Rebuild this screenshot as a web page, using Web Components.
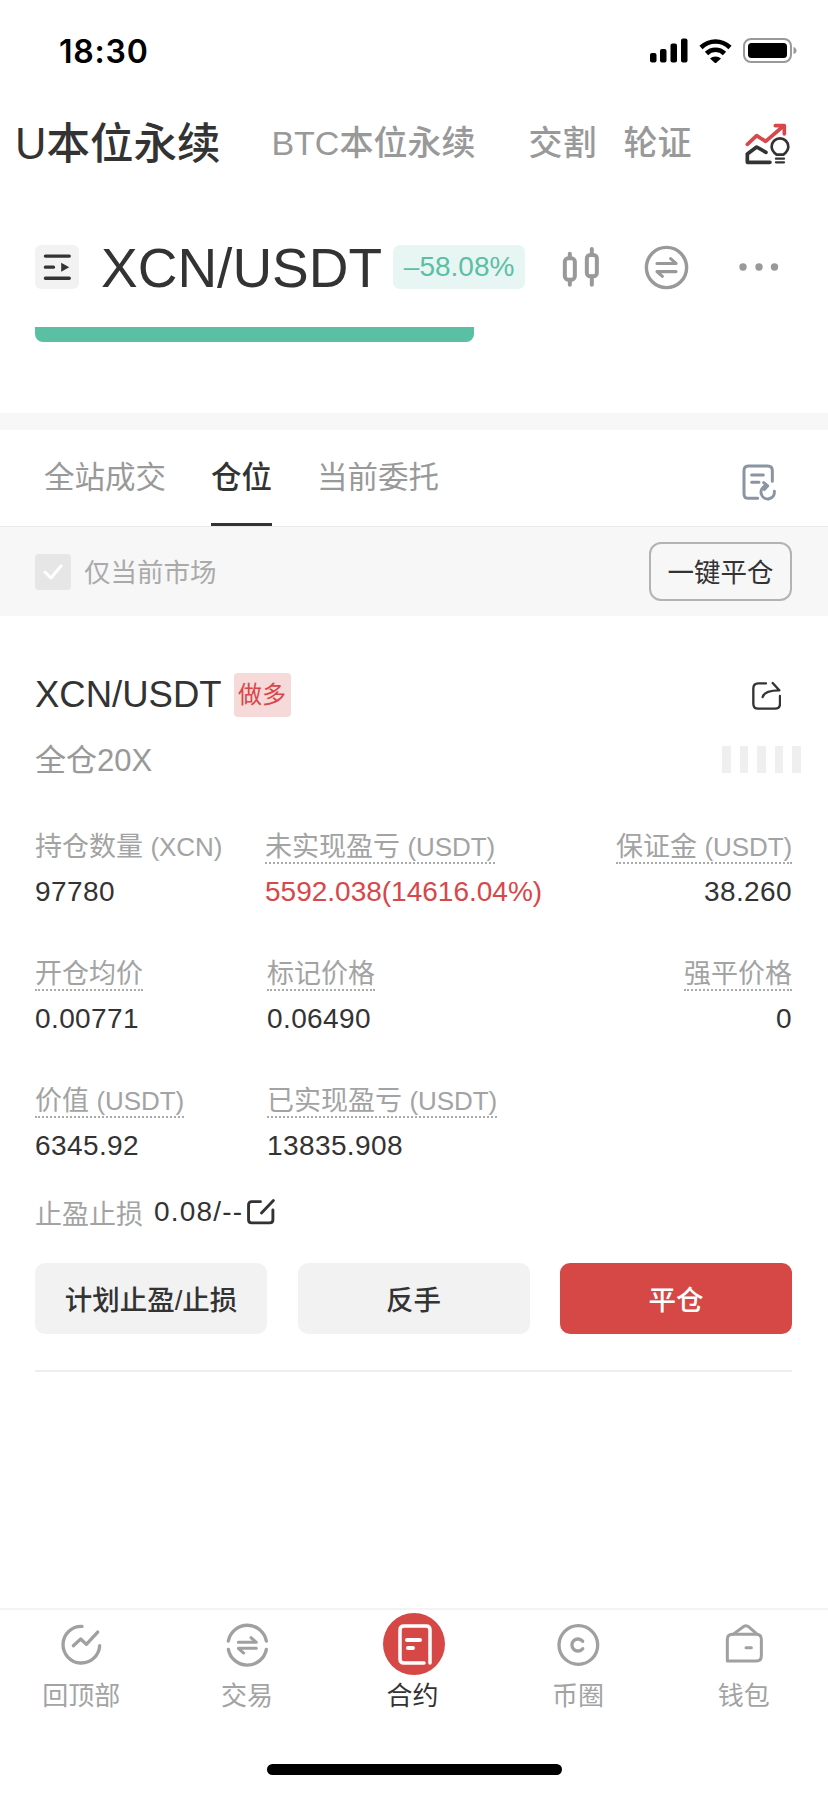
<!DOCTYPE html>
<html lang="zh-CN">
<head>
<meta charset="utf-8">
<title>合约</title>
<style>
  html, body { margin: 0; background: #fff; }
  body {
    font-family: "Liberation Sans", "Noto Sans CJK SC", sans-serif;
    color: #333;
  }
</style>
</head>
<body>
<app-page></app-page>

<script>
class AppPage extends HTMLElement {
  constructor() {
    super();
    this.attachShadow({ mode: 'open' });
  }

  connectedCallback() {
    this.shadowRoot.innerHTML = `
      <style>
        :host { display: flex; flex-direction: column; width: 828px; height: 1793px; overflow: hidden; background: #fff; }
        .band { height: 17px; background: #f7f7f7; margin-top: 71px; }
        .grow { flex: 1; }
      </style>
      <status-bar></status-bar>
      <market-tabs></market-tabs>
      <symbol-header></symbol-header>
      <div class="band"></div>
      <position-tabs></position-tabs>
      <position-filter></position-filter>
      <position-card></position-card>
      <div class="grow"></div>
      <bottom-nav></bottom-nav>
    `;
  }
}

class StatusBar extends HTMLElement {
  constructor() {
    super();
    this.attachShadow({ mode: 'open' });
  }

  connectedCallback() {
    this.shadowRoot.innerHTML = `
      <style>
        :host { display: flex; align-items: center; justify-content: space-between; height: 100px; padding: 0 31px 0 59px; box-sizing: border-box; color: #000; }
        .time { font-family: "Inter", sans-serif; font-size: 32px; font-weight: 600; letter-spacing: 0.8px; padding-top: 2px; }
        .icons { display: flex; align-items: center; gap: 11px; }
        svg { display: block; }
      </style>
      <span class="time">18:30</span>
      <div class="icons">
        <svg width="38" height="25" viewBox="0 0 38 25">
          <rect x="0" y="15" width="6.5" height="9.5" rx="2"/>
          <rect x="10" y="11" width="6.5" height="13.5" rx="2"/>
          <rect x="20.5" y="5.5" width="6.5" height="19" rx="2"/>
          <rect x="31" y="0.5" width="6.5" height="24" rx="2"/>
        </svg>
        <svg width="33" height="25" viewBox="0 0 33 25">
          <path d="M2 9.5C10.500 1.500 22.500 1.500 31 9.500M7.500 15.500C12.500 10.500 20.500 10.500 25.500 15.500" fill="none" stroke="#000" stroke-width="4.600"/>
          <path d="M11 20.500C14 17.800 19 17.800 22 20.500L16.500 25.500Z"/>
        </svg>
        <svg width="54" height="25" viewBox="0 0 54 25">
          <rect x="1" y="1" width="47" height="23" rx="7" fill="none" stroke="#999" stroke-width="2"/>
          <rect x="5" y="5" width="39" height="15" rx="3.500"/>
          <path d="M50.500 9C52.500 9.500 53.500 11 53.500 12.500C53.500 14 52.500 15.500 50.500 16Z" fill="#999"/>
        </svg>
      </div>
    `;
  }
}

class MarketTabs extends HTMLElement {
  constructor() {
    super();
    this.attachShadow({ mode: 'open' });
  }

  connectedCallback() {
    this.shadowRoot.innerHTML = `
      <style>
        :host { display: flex; align-items: center; height: 86px; box-sizing: border-box; padding: 0 0 6px 15px; color: #999; font-size: 34px; font-weight: 500; }
        .active { color: #333; font-size: 43.500px; margin-right: 51px; }
        .btc { margin-right: 53px; }
        .deliver { margin-right: 27px; }
        svg { display: block; margin: 8px 35px 0 auto; }
      </style>
      <span class="active">U本位永续</span>
      <span class="btc">BTC本位永续</span>
      <span class="deliver">交割</span>
      <span>轮证</span>
      <svg width="53.300" height="50" viewBox="600 60 160 150" fill="none" stroke-linecap="round" stroke-linejoin="round">
        <path d="M622 136L650 110L677 127L727 84" stroke="#d8474a" stroke-width="11"/>
        <path d="M706 80H733V105" stroke="#d8474a" stroke-width="11"/>
        <path d="M622 165V190H690M622 165L650 144L678 160" stroke="#333" stroke-width="11"/>
        <path d="M710 167C702 161 695 154 695 143A25 25 0 0 1 745 143C745 154 738 161 730 167Z" stroke="#333" stroke-width="8"/>
        <path d="M708 179H732M708 190H732" stroke="#333" stroke-width="7"/>
      </svg>
    `;
  }
}

class SymbolHeader extends HTMLElement {
  constructor() {
    super();
    this.attachShadow({ mode: 'open' });
  }

  connectedCallback() {
    this.shadowRoot.innerHTML = `
      <style>
        :host { display: block; padding: 59px 0 0 35px; }
        .row { display: flex; align-items: center; height: 44px; }
        .menu { width: 44px; height: 44px; border-radius: 6px; background: #f2f2f2; margin-right: 22px; flex: none; }
        .name { font-size: 55px; color: #333; margin-right: 11px; padding-top: 2px; white-space: nowrap; }
        .change { width: 132px; height: 44px; line-height: 44px; text-align: center; border-radius: 7px; background: #e7f6f3; color: #5cbfa5; font-size: 28px; flex: none; }
        svg { display: block; flex: none; }
        .bar { width: 439px; height: 15px; margin-top: 38px; background: #5abfa3; border-radius: 0 0 8px 8px; }
      </style>
      <div class="row">
        <div class="menu">
          <svg width="44" height="44" viewBox="47 45 131 131" fill="none" stroke="#333" stroke-width="10" stroke-linecap="round">
            <path d="M78 78H149M78 111H102M78 144H149"/>
            <path d="M125 98L149 111L125 125Z" fill="#333" stroke="none"/>
          </svg>
        </div>
        <span class="name">XCN/USDT</span>
        <span class="change">–58.08%</span>
        <svg style="margin-left:37px" width="38" height="40" viewBox="65 440 113 120" fill="none" stroke="#999" stroke-width="12" stroke-linecap="round">
          <rect x="73" y="474" width="30" height="64" rx="10"/>
          <rect x="139" y="464" width="30" height="64" rx="10"/>
          <path d="M88 460V474M88 538V553M154 446V464M154 528V553"/>
        </svg>
        <svg style="margin-left:44px" width="45" height="45" viewBox="314 436 132 132" fill="none" stroke="#999" stroke-linecap="round" stroke-linejoin="round">
          <circle cx="380" cy="502" r="59" stroke-width="10"/>
          <path d="M352 490H408L392 476M408 514H352L368 528" stroke-width="9"/>
        </svg>
        <svg style="margin-left:50px" width="40" height="8" viewBox="0 0 40 8" fill="#999">
          <circle cx="4" cy="4" r="3.700"/><circle cx="20" cy="4" r="3.700"/><circle cx="35.500" cy="4" r="3.700"/>
        </svg>
      </div>
      <div class="bar"></div>
    `;
  }
}

class PositionTabs extends HTMLElement {
  constructor() {
    super();
    this.attachShadow({ mode: 'open' });
  }

  connectedCallback() {
    this.shadowRoot.innerHTML = `
      <style>
        :host { display: flex; height: 97px; box-sizing: border-box; padding-left: 44px; border-bottom: 1px solid #e9e9e9; color: #999; font-size: 30.500px; }
        .tab { display: block; height: 92px; line-height: 95px; margin-right: 45px; box-sizing: content-box; }
        .on { color: #333; font-weight: 500; height: 93px; border-bottom: 3px solid #333; }
        svg { display: block; margin: 32px 48px 0 auto; }
      </style>
      <span class="tab">全站成交</span>
      <span class="tab on">仓位</span>
      <span class="tab">当前委托</span>
      <svg width="40" height="40" viewBox="125 64 120 120" fill="none" stroke="#8a94a3" stroke-width="9" stroke-linecap="round" stroke-linejoin="round">
        <path d="M178 173H150Q137 173 137 159V90Q137 76 150 76H208Q222 76 222 90V122"/>
        <path d="M160 103H195M160 125H182"/>
        <path d="M201 136A20 20 0 1 0 228 152M196 126L208 136L198 146"/>
      </svg>
    `;
  }
}

class PositionFilter extends HTMLElement {
  constructor() {
    super();
    this.attachShadow({ mode: 'open' });
  }

  connectedCallback() {
    this.shadowRoot.innerHTML = `
      <style>
        :host { display: flex; align-items: center; height: 89px; padding: 0 36px 0 35px; background: #f7f7f7; }
        .check { width: 36px; height: 36px; border-radius: 4px; background: #e6e6e6; margin-right: 13px; }
        svg { display: block; }
        .label { color: #aaa; font-size: 26.500px; padding-bottom: 2px; }
        button { margin-left: auto; width: 143px; height: 59px; padding: 0 0 2px; border: 2px solid #b3b3b3; border-radius: 12px; background: transparent; color: #333; font: inherit; font-size: 26.500px; }
      </style>
      <div class="check">
        <svg width="36" height="36" viewBox="0 0 36 36" fill="none" stroke="#fff" stroke-width="3" stroke-linecap="round" stroke-linejoin="round"><path d="M10 18L16 24L26 12"/></svg>
      </div>
      <span class="label">仅当前市场</span>
      <button>一键平仓</button>
    `;
  }
}

class StatCell extends HTMLElement {
  constructor() {
    super();
    this.attachShadow({ mode: 'open' });
  }

  connectedCallback() {
    const plain = this.hasAttribute('plain');
    const unit = this.getAttribute('unit');
    this.shadowRoot.innerHTML = `
      <style>
        :host { display: flex; flex-direction: column; align-items: flex-start; }
        :host([end]) { align-items: flex-end; }
        .label { display: block; height: 30px; line-height: 30px; color: #a3a3a3; font-size: 27px; white-space: nowrap; ${plain ? 'padding-bottom: 2px;' : 'border-bottom: 2px dotted #aaa;'} }
        .unit { font-size: 26px; letter-spacing: -0.1px; }
        .value { display: block; margin-top: 11px; height: 34px; line-height: 34px; font-size: 28px; letter-spacing: 0.4px; white-space: nowrap; color: #333; }
        :host([red]) .value { color: #d8474a; letter-spacing: 0; }
      </style>
      <span class="label">${this.getAttribute('label')}${unit ? ` <span class="unit">${unit}</span>` : ''}</span>
      <span class="value"><slot></slot></span>
    `;
  }
}

class PositionCard extends HTMLElement {
  constructor() {
    super();
    this.attachShadow({ mode: 'open' });
  }

  connectedCallback() {
    this.shadowRoot.innerHTML = `
      <style>
        :host { display: block; padding: 57px 36px 0 35px; }
        .title { display: flex; align-items: center; height: 44px; }
        .pair { font-size: 36.500px; color: #333; }
        .side { width: 57px; height: 44px; line-height: 44px; margin-left: 12px; text-align: center; border-radius: 4px; background: #f6d9d9; color: #d8474a; font-size: 24px; }
        .title svg { margin-left: auto; margin-right: 11px; display: block; }
        .sub { display: flex; align-items: center; height: 36px; margin-top: 24px; color: #999; font-size: 31px; }
        .sub span { margin-bottom: 4px; }
        .stripes { margin-left: auto; margin-right: -9px; display: flex; gap: 9px; }
        .stripes i { display: block; width: 8.600px; height: 27px; background: #efefef; }
        .stats { display: flex; flex-direction: column; gap: 50px; margin-top: 55px; }
        .row { display: grid; grid-template-columns: 232px 1fr auto; }
        .row.first { grid-template-columns: 230px 1fr auto; }
        .tp { display: flex; align-items: center; height: 32px; margin-top: 33px; font-size: 28px; color: #333; }
        .tp .k { color: #a3a3a3; font-size: 27px; margin-right: 11px; }
        .tp .v { letter-spacing: 1.2px; }
        .tp svg { display: block; margin-left: 4px; }
        .actions { display: grid; grid-template-columns: repeat(3, 232px); justify-content: space-between; margin-top: 35px; }
        .divider { height: 2px; margin-top: 36px; background: #eee; }
      </style>
      <div class="title">
        <span class="pair">XCN/USDT</span>
        <span class="side">做多</span>
        <svg width="29" height="29" viewBox="153 60 87 87" fill="none" stroke="#333" stroke-width="7" stroke-linecap="round" stroke-linejoin="round">
          <path d="M195 67H172Q157 67 157 82V128Q157 143 172 143H222Q237 143 237 128V105"/>
          <path d="M185 108Q190 88 235 88L215 66"/>
        </svg>
      </div>
      <div class="sub">
        <span>全仓20X</span>
        <div class="stripes"><i></i><i></i><i></i><i></i><i></i></div>
      </div>
      <div class="stats">
        <div class="row first">
          <stat-cell plain label="持仓数量" unit="(XCN)">97780</stat-cell>
          <stat-cell red label="未实现盈亏" unit="(USDT)">5592.038(14616.04%)</stat-cell>
          <stat-cell end label="保证金" unit="(USDT)">38.260</stat-cell>
        </div>
        <div class="row">
          <stat-cell label="开仓均价">0.00771</stat-cell>
          <stat-cell label="标记价格">0.06490</stat-cell>
          <stat-cell end label="强平价格">0</stat-cell>
        </div>
        <div class="row">
          <stat-cell label="价值" unit="(USDT)">6345.92</stat-cell>
          <stat-cell label="已实现盈亏" unit="(USDT)">13835.908</stat-cell>
        </div>
      </div>
      <div class="tp">
        <span class="k">止盈止损</span>
        <span class="v">0.08/--</span>
        <svg width="29" height="28" viewBox="0 0 28 24" fill="none" stroke="#333" stroke-width="2.800" stroke-linecap="round">
          <path d="M13 2H4.500Q1.500 2 1.500 5V19.500Q1.500 22.500 4.500 22.500H22Q25 22.500 25 19.500V10"/>
          <path d="M14 13L25.500 1"/>
        </svg>
      </div>
      <div class="actions">
        <action-button>计划止盈/止损</action-button>
        <action-button>反手</action-button>
        <action-button primary>平仓</action-button>
      </div>
      <div class="divider"></div>
    `;
  }
}

class ActionButton extends HTMLElement {
  constructor() {
    super();
    this.attachShadow({ mode: 'open' });
  }

  connectedCallback() {
    this.shadowRoot.innerHTML = `
      <style>
        :host { display: flex; align-items: center; justify-content: center; height: 71px; box-sizing: border-box; padding-bottom: 2px; border-radius: 10px; background: #f2f2f2; color: #333; font-size: 27.500px; font-weight: 500; }
        :host([primary]) { background: #d64845; color: #fff; }
      </style>
      <slot></slot>
    `;
  }
}

class NavItem extends HTMLElement {
  constructor() {
    super();
    this.attachShadow({ mode: 'open' });
  }

  connectedCallback() {
    this.shadowRoot.innerHTML = `
      <style>
        :host { display: flex; flex-direction: column; align-items: center; color: #a3a3a3; font-size: 26px; }
        :host([active]) { color: #333; }
        .icon { display: flex; align-items: center; justify-content: center; width: 62px; height: 62px; border-radius: 50%; }
        :host([active]) .icon { background: #d64845; }
        .text { height: 36px; line-height: 36px; margin: 3px 0 0 -3px; }
      </style>
      <div class="icon"><slot name="icon"></slot></div>
      <span class="text"><slot></slot></span>
    `;
  }
}

class BottomNav extends HTMLElement {
  constructor() {
    super();
    this.attachShadow({ mode: 'open' });
  }

  connectedCallback() {
    this.shadowRoot.innerHTML = `
      <style>
        :host { display: block; border-top: 2px solid #f3f3f3; }
        .items { display: grid; grid-template-columns: repeat(5, 1fr); padding-top: 3px; }
        svg { display: block; }
        .home { width: 295px; height: 11px; margin: 50px auto 18px; border-radius: 6px; background: #000; }
      </style>
      <div class="items">
        <nav-item>
          <svg slot="icon" width="46.700" height="46.700" viewBox="88 30 140 140" fill="none" stroke="#a0a0a0" stroke-width="10" stroke-linecap="round" stroke-linejoin="round">
            <path d="M157 46A55 55 0 1 0 210 104"/>
            <path d="M131 104L153 84L170 100L204 63"/>
          </svg>
          回顶部
        </nav-item>
        <nav-item>
          <svg slot="icon" width="46.700" height="46.700" viewBox="588 30 140 140" fill="none" stroke="#a0a0a0" stroke-linecap="round" stroke-linejoin="round">
            <path d="M598 90A58 58 0 0 1 712 90M598 115A58 58 0 0 0 712 115" stroke-width="10"/>
            <path d="M628 94H682L666 80M682 112H628L644 126" stroke-width="9"/>
          </svg>
          交易
        </nav-item>
        <nav-item active>
          <svg slot="icon" width="62" height="62" viewBox="0 0 62 62" fill="none" stroke="#fff" stroke-width="3.500" stroke-linecap="round" stroke-linejoin="round">
            <path d="M41 50H21Q17 50 17 46V17Q17 13 21 13H43Q47 13 47 17V50"/>
            <path d="M24 27H37M25 35H30" stroke-width="4"/>
          </svg>
          合约
        </nav-item>
        <nav-item>
          <svg slot="icon" width="46.700" height="46.700" viewBox="471 30 140 140" fill="none" stroke="#a0a0a0" stroke-linecap="round">
            <circle cx="538" cy="102" r="58" stroke-width="10"/>
            <path d="M551 91A18 18 0 1 0 551 113" stroke-width="10"/>
          </svg>
          币圈
        </nav-item>
        <nav-item>
          <svg slot="icon" width="46.700" height="46.700" viewBox="969 30 140 140" fill="none" stroke="#a0a0a0" stroke-width="9" stroke-linecap="round" stroke-linejoin="round">
            <path d="M985 148V85Q985 70 1000 70H1072Q1087 70 1087 85V135Q1087 150 1072 150H985"/>
            <path d="M1002 70L1035 46Q1042 42 1050 48L1075 70M1041 110H1057"/>
          </svg>
          钱包
        </nav-item>
      </div>
      <div class="home"></div>
    `;
  }
}

customElements.define('app-page', AppPage);
customElements.define('status-bar', StatusBar);
customElements.define('market-tabs', MarketTabs);
customElements.define('symbol-header', SymbolHeader);
customElements.define('position-tabs', PositionTabs);
customElements.define('position-filter', PositionFilter);
customElements.define('stat-cell', StatCell);
customElements.define('position-card', PositionCard);
customElements.define('action-button', ActionButton);
customElements.define('nav-item', NavItem);
customElements.define('bottom-nav', BottomNav);
</script>
</body>
</html>
